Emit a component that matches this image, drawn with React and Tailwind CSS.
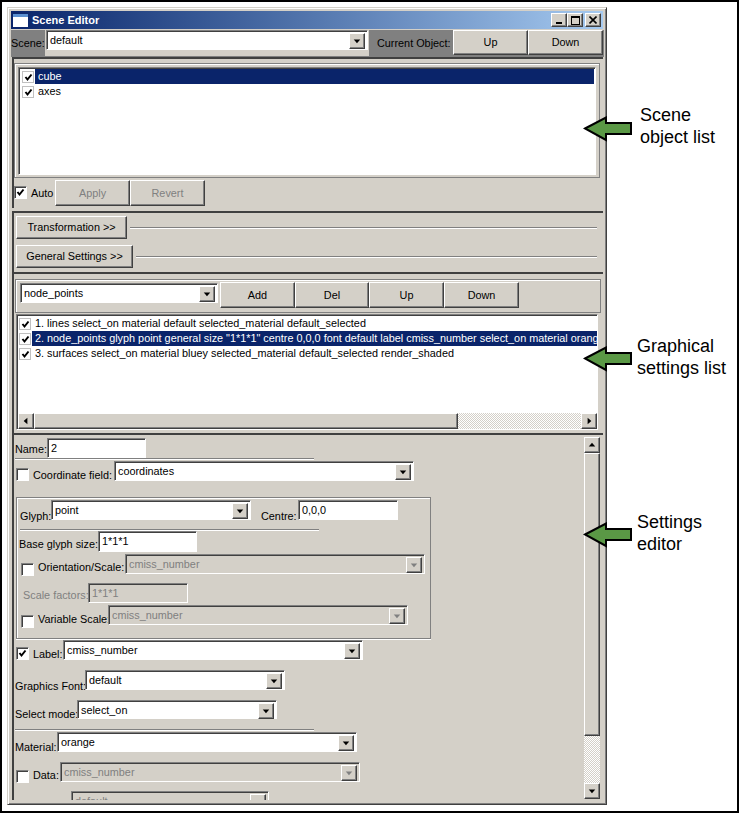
import React from "react";

const raised =
  "bg-[#d4d0c8] border border-t-white border-l-white border-r-[#404040] border-b-[#404040] shadow-[inset_-1px_-1px_0_#808080]";
const sunken =
  "border border-t-[#808080] border-l-[#808080] border-r-white border-b-white shadow-[inset_1px_1px_0_#404040]";
const dither =
  "bg-[repeating-conic-gradient(#d4d0c8_0%_25%,#ffffff_0%_50%)] bg-[length:2px_2px]";

const Button = ({ className = "", disabled, children }) => (
  <div
    className={`${raised} flex shrink-0 items-center justify-center ${
      disabled ? "text-[#808080]" : "text-black"
    } ${className}`}
  >
    {children}
  </div>
);

const Arrow = ({ dir = "down", disabled, className = "" }) => {
  const points = {
    down: "4,6 11,6 7.5,10",
    up: "4,9 11,9 7.5,5",
    left: "9,4 9,11 5,7.5",
    right: "6,4 6,11 10,7.5",
  };
  return (
    <div className={`${raised} shrink-0 ${className}`}>
      <svg width="14" height="14" viewBox="0 0 15 15">
        <polygon points={points[dir]} fill={disabled ? "#808080" : "#000"} />
      </svg>
    </div>
  );
};

const Combo = ({ value, disabled, className = "" }) => (
  <div
    className={`${sunken} flex shrink-0 pl-[3px] pr-[2px] pt-[2px] ${
      disabled ? "bg-[#d4d0c8] text-[#808080]" : "bg-white text-black"
    } ${className}`}
  >
    <span className="flex-1 leading-[14px]">{value}</span>
    <Arrow disabled={disabled} className="w-[16px] h-[16px]" />
  </div>
);

const Field = ({ value, disabled, className = "" }) => (
  <div
    className={`${sunken} shrink-0 pl-[3px] pt-[2px] leading-[14px] ${
      disabled ? "bg-[#d4d0c8] text-[#808080]" : "bg-white text-black"
    } ${className}`}
  >
    {value}
  </div>
);

const Check = ({ checked, className = "" }) => (
  <div className={`${sunken} bg-white w-[13px] h-[13px] shrink-0 ${className}`}>
    {checked && (
      <svg width="11" height="11" viewBox="0 0 11 11" fill="none">
        <path d="M2.5 5 L4.5 7.5 L8.5 2.5" stroke="#000" strokeWidth="2" />
      </svg>
    )}
  </div>
);

const Rule = ({ className = "" }) => (
  <div className={`h-[2px] border-t border-t-[#808080] border-b border-b-white ${className}`} />
);

const Row = ({ className = "", children }) => (
  <div className={`flex items-end whitespace-nowrap ${className}`}>{children}</div>
);

const ListRow = ({ text, selected, className = "" }) => (
  <div className={`flex h-[15px] items-center ${className}`}>
    <Check checked className="ml-[1px] !w-[12px] !h-[12px] !border-[#c0c0c0] !shadow-none" />
    <span
      className={`ml-[1px] flex-1 overflow-hidden whitespace-nowrap pl-[3px] leading-[15px] ${
        selected ? "bg-[#0a246a] text-white" : "text-black"
      }`}
    >
      {text}
    </span>
  </div>
);

// green call-out arrows, they sit over the window edge
const Callout = ({ className = "" }) => (
  <svg
    width="50"
    height="26"
    viewBox="0 0 50 26"
    className={`absolute left-[581px] ${className}`}
  >
    <polygon
      points="2,12.5 23,1.5 23,7 48,7 48,18 23,18 23,24"
      fill="#5a9845"
      stroke="#000"
      strokeWidth="2"
    />
  </svg>
);

const SettingsEditor = () => (
  <div className="flex h-[365px] overflow-hidden pl-[1px]">
    <div className="w-[569px] shrink-0">
      <Row className="mt-[3px]">
        <span className="w-[32px] leading-[16px] pb-[1px]">Name:</span>
        <Field value="2" className="w-[99px] h-[20px]" />
      </Row>
      <Rule className="w-[299px]" />
      <Row className="mt-[1px] ml-[1px]">
        <Check />
        <span className="ml-[4px] w-[81px] leading-[16px] -mb-[2px]">Coordinate field:</span>
        <Combo value="coordinates" className="w-[300px] h-[20px]" />
      </Row>

      <div className="mt-[16px] ml-[1px] w-[415px] h-[142px] border border-[#808080] shadow-[inset_1px_1px_0_#ffffff,0_1px_0_#ffffff]">
        <Row className="mt-[2px] ml-[3px]">
          <span className="w-[31px] leading-[16px] -mb-[4px]">Glyph:</span>
          <Combo value="point" className="w-[200px] h-[20px]" />
          <span className="ml-[10px] w-[37px] leading-[16px] -mb-[4px]">Centre:</span>
          <Field value="0,0,0" className="w-[100px] h-[20px]" />
        </Row>
        <Rule className="mt-[9px] ml-[3px] w-[299px]" />
        <Row className="ml-[2px]">
          <span className="w-[79px] leading-[16px]">Base glyph size:</span>
          <Field value="1*1*1" className="w-[99px] h-[21px]" />
        </Row>
        <Row className="mt-[2px] ml-[4px]">
          <Check className="-mb-[2px]" />
          <span className="ml-[4px] w-[87px] leading-[16px] -mb-[1px]">Orientation/Scale:</span>
          <Combo disabled value="cmiss_number" className="w-[300px] h-[20px]" />
        </Row>
        <Row className="mt-[9px] ml-[6px]">
          <span className="w-[65px] text-[#808080] leading-[16px]">Scale factors:</span>
          <Field disabled value="1*1*1" className="w-[100px] h-[20px]" />
        </Row>
        <Row className="mt-[2px] ml-[4px]">
          <Check className="-mb-[3px]" />
          <span className="ml-[4px] w-[70px] leading-[16px] -mb-[2px]">Variable Scale:</span>
          <Combo disabled value="cmiss_number" className="w-[300px] h-[20px]" />
        </Row>
      </div>

      <Row className="mt-[1px] ml-[1px]">
        <Check checked />
        <span className="ml-[4px] w-[30px] leading-[16px] -mb-[2px]">Label:</span>
        <Combo value="cmiss_number" className="w-[300px] h-[20px]" />
      </Row>
      <Row className="mt-[10px]">
        <span className="w-[70px] leading-[16px] -mb-[4px]">Graphics Font:</span>
        <Combo value="default" className="w-[200px] h-[20px]" />
      </Row>
      <Row className="mt-[10px]">
        <span className="w-[62px] leading-[16px] -mb-[3px]">Select mode:</span>
        <Combo value="select_on" className="w-[200px] h-[19px]" />
      </Row>
      <Rule className="mt-[10px] w-[299px]" />
      <Row className="mt-[1px]">
        <span className="w-[42px] leading-[16px] -mb-[3px]">Material:</span>
        <Combo value="orange" className="w-[300px] h-[20px]" />
      </Row>
      <Row className="mt-[10px] ml-[1px]">
        <Check className="-mb-[1px]" />
        <span className="ml-[4px] w-[27px] leading-[16px] -mb-[1px]">Data:</span>
        <Combo disabled value="cmiss_number" className="w-[300px] h-[20px]" />
      </Row>
      <Combo disabled value="default" className="mt-[9px] ml-[56px] w-[198px] h-[20px]" />
    </div>

    {/* vertical scroll bar */}
    <div className="flex w-[16px] shrink-0 flex-col mt-[2px] h-[362px]">
      <Arrow dir="up" className="w-[16px] h-[16px]" />
      <div className={`${raised} w-[16px] h-[283px] shrink-0`} />
      <div className={`${dither} flex-1`} />
      <Arrow dir="down" className="w-[16px] h-[16px]" />
    </div>
  </div>
);

const App = () => (
  <div className="relative flex w-[739px] h-[813px] overflow-hidden border-2 border-black bg-white font-['Liberation_Sans',sans-serif] text-[10.85px] text-black">
    {/* Scene Editor window */}
    <div className="ml-[5px] mt-[5px] w-[600px] h-[798px] shrink-0 bg-[#d4d0c8] border border-t-[#d4d0c8] border-l-[#d4d0c8] border-r-[#404040] border-b-[#404040] shadow-[inset_1px_1px_0_#ffffff,inset_-1px_-1px_0_#808080] p-[3px]">
      {/* title bar */}
      <div className="flex h-[18px] items-center bg-gradient-to-r from-[#0a246a] to-[#a6caf0] pl-[2px] pr-[2px]">
        <div className="w-[15px] h-[13px] border-t-[3px] border-t-[#5a8fd0] bg-white" />
        <span className="ml-[4px] flex-1 text-[11px] font-bold text-white">Scene Editor</span>
        <Button className="w-[16px] h-[14px] items-end">
          <div className="mb-[2px] w-[6px] h-[2px] bg-black" />
        </Button>
        <Button className="w-[16px] h-[14px]">
          <div className="w-[9px] h-[9px] border border-t-2 border-black" />
        </Button>
        <Button className="ml-[2px] w-[16px] h-[14px]">
          <svg width="8" height="8" viewBox="0 0 8 8">
            <path d="M0.5 0.5 L7.5 7.5 M7.5 0.5 L0.5 7.5" stroke="#000" strokeWidth="1.6" />
          </svg>
        </Button>
      </div>

      {/* scene row */}
      <div className="flex h-[27px] bg-[#808080] mt-[1px] -mr-[1px]">
        <span className="w-[34px] pt-[5px] leading-[16px] whitespace-nowrap">Scene:</span>
        <div className="w-[324px] h-[26px] bg-[#d4d0c8]">
          <Combo value="default" className="w-[322px] h-[20px] ml-[1px]" />
        </div>
        <span className="ml-[8px] w-[76px] pt-[5px] leading-[16px] whitespace-nowrap">Current Object:</span>
        <Button className="w-[75px] h-[25px]">Up</Button>
        <Button className="w-[75px] h-[25px]">Down</Button>
      </div>

      {/* scene object list */}
      <div className="ml-[1px] h-[151px] border-t-2 border-l-2 border-t-[#404040] border-l-[#404040] pr-[3px]">
        <div className="mt-[4px] h-[115px] border border-[#808080] shadow-[inset_1px_1px_0_#ffffff] pt-[3px] pl-[3px] pr-[3px]">
          <div className={`${sunken} h-[108px] bg-white pl-[2px] pr-[1px] pt-[1px]`}>
            <ListRow text="cube" selected />
            <ListRow text="axes" />
          </div>
        </div>
        <div className="mt-[2px] flex">
          <Check checked className="mt-[6px]" />
          <span className="ml-[4px] mt-[5px] w-[24px] leading-[16px]">Auto</span>
          <Button disabled className="w-[75px] h-[26px]">Apply</Button>
          <Button disabled className="w-[75px] h-[26px]">Revert</Button>
        </div>
      </div>

      {/* transformation + general settings */}
      <div className="ml-[1px] mt-[3px] h-[61px] border-t-2 border-l-2 border-t-[#404040] border-l-[#404040]">
        <div className="mt-[3px] ml-[2px] flex items-center">
          <Button className="w-[111px] h-[23px]">Transformation &gt;&gt;</Button>
          <Rule className="ml-[3px] flex-1 mr-[6px]" />
        </div>
        <div className="mt-[6px] ml-[2px] flex items-center">
          <Button className="w-[117px] h-[23px]">General Settings &gt;&gt;</Button>
          <Rule className="ml-[3px] flex-1 mr-[6px]" />
        </div>
      </div>

      {/* graphical settings */}
      <div className="ml-[1px] h-[161px] border-t-2 border-l-2 border-t-[#404040] border-l-[#404040] pr-[2px]">
        <div className="mt-[5px] ml-[1px] h-[34px] border border-[#808080] shadow-[inset_1px_1px_0_#ffffff] flex items-start pl-[4px] pt-[3px]">
          <Combo value="node_points" className="w-[198px] h-[20px]" />
          <Button className="ml-[2px] w-[75px] h-[26px] -mt-[1px]">Add</Button>
          <Button className="w-[74px] h-[26px] -mt-[1px]">Del</Button>
          <Button className="w-[75px] h-[26px] -mt-[1px]">Up</Button>
          <Button className="w-[75px] h-[26px] -mt-[1px]">Down</Button>
        </div>
        <div className={`${sunken} mt-[1px] ml-[2px] h-[116px] bg-white flex flex-col pl-[1px] pt-[1px] w-[582px]`}>
          <ListRow text="1. lines select_on material default selected_material default_selected" />
          <ListRow
            selected
            text={'2. node_points glyph point general size "1*1*1" centre 0,0,0 font default label cmiss_number select_on material orange'}
          />
          <ListRow text="3. surfaces select_on material bluey selected_material default_selected render_shaded" />
          <div className="mt-auto flex h-[16px] shrink-0">
            <Arrow dir="left" className="w-[16px] h-[16px]" />
            <div className={`${raised} w-[424px]`} />
            <div className={`${dither} flex-1`} />
            <Arrow dir="right" className="w-[16px] h-[16px]" />
          </div>
        </div>
      </div>

      {/* settings editor */}
      <div className="ml-[1px] border-t-2 border-l-2 border-t-[#404040] border-l-[#404040]">
        <SettingsEditor />
      </div>
    </div>

    {/* annotations */}
    <div className="ml-[33px] flex flex-col text-[18px] leading-[22px] text-black whitespace-nowrap">
      <p className="mt-[102px]">Scene<br />object list</p>
      <p className="mt-[187px] -ml-[3px]">Graphical<br />settings list</p>
      <p className="mt-[132px] -ml-[3px]">Settings<br />editor</p>
    </div>

    <Callout className="top-[114px]" />
    <Callout className="top-[344px]" />
    <Callout className="top-[520px]" />
  </div>
);

export default App;
